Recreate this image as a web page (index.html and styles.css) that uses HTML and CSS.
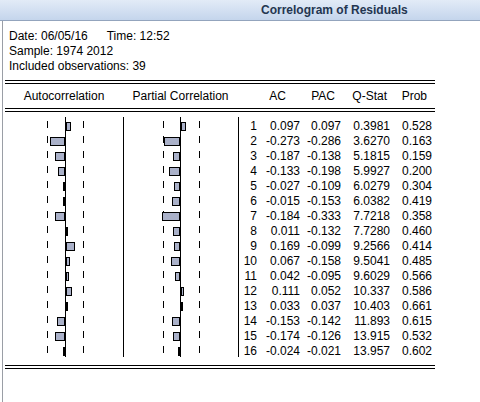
FILE: index.html
```html
<!DOCTYPE html>
<html>
<head>
<meta charset="utf-8">
<link rel="stylesheet" href="styles.css">
</head>
<body>
<div class="titlebar">Correlogram of Residuals</div>
<div class="content">
  <div class="meta">
    <div>Date: 06/05/16<span class="gap">Time: 12:52</span></div>
    <div>Sample: 1974 2012</div>
    <div>Included observations: 39</div>
  </div>
  <div class="table">
    <div class="rule"></div>
    <div class="head">
      <div class="hc hac">Autocorrelation</div>
      <div class="hc hpac">Partial Correlation</div>
      <div class="hnum"><span>AC</span><span>PAC</span><span>Q-Stat</span><span>Prob</span></div>
    </div>
    <div class="rule"></div>
    <div class="body">
      <div class="row">
        <div class="chart ac"><div class="neg"></div><div class="pos"><i class="bar" style="width:5px"></i></div></div>
        <div class="chart pac"><div class="neg"></div><div class="pos"><i class="bar" style="width:5px"></i></div></div>
        <div class="nums"><span>1</span><span>0.097</span><span>0.097</span><span>0.3981</span><span>0.528</span></div>
      </div>
      <div class="row">
        <div class="chart ac"><div class="neg"><i class="bar" style="width:15px"></i></div><div class="pos"></div></div>
        <div class="chart pac"><div class="neg"><i class="bar" style="width:16px"></i></div><div class="pos"></div></div>
        <div class="nums"><span>2</span><span>-0.273</span><span>-0.286</span><span>3.6270</span><span>0.163</span></div>
      </div>
      <div class="row">
        <div class="chart ac"><div class="neg"><i class="bar" style="width:10px"></i></div><div class="pos"></div></div>
        <div class="chart pac"><div class="neg"><i class="bar" style="width:7px"></i></div><div class="pos"></div></div>
        <div class="nums"><span>3</span><span>-0.187</span><span>-0.138</span><span>5.1815</span><span>0.159</span></div>
      </div>
      <div class="row">
        <div class="chart ac"><div class="neg"><i class="bar" style="width:7px"></i></div><div class="pos"></div></div>
        <div class="chart pac"><div class="neg"><i class="bar" style="width:11px"></i></div><div class="pos"></div></div>
        <div class="nums"><span>4</span><span>-0.133</span><span>-0.198</span><span>5.9927</span><span>0.200</span></div>
      </div>
      <div class="row">
        <div class="chart ac"><div class="neg"><i class="bar" style="width:2px"></i></div><div class="pos"></div></div>
        <div class="chart pac"><div class="neg"><i class="bar" style="width:6px"></i></div><div class="pos"></div></div>
        <div class="nums"><span>5</span><span>-0.027</span><span>-0.109</span><span>6.0279</span><span>0.304</span></div>
      </div>
      <div class="row">
        <div class="chart ac"><div class="neg"><i class="bar" style="width:1px"></i></div><div class="pos"></div></div>
        <div class="chart pac"><div class="neg"><i class="bar" style="width:8px"></i></div><div class="pos"></div></div>
        <div class="nums"><span>6</span><span>-0.015</span><span>-0.153</span><span>6.0382</span><span>0.419</span></div>
      </div>
      <div class="row">
        <div class="chart ac"><div class="neg"><i class="bar" style="width:10px"></i></div><div class="pos"></div></div>
        <div class="chart pac"><div class="neg"><i class="bar" style="width:18px"></i></div><div class="pos"></div></div>
        <div class="nums"><span>7</span><span>-0.184</span><span>-0.333</span><span>7.7218</span><span>0.358</span></div>
      </div>
      <div class="row">
        <div class="chart ac"><div class="neg"></div><div class="pos"><i class="bar" style="width:1px"></i></div></div>
        <div class="chart pac"><div class="neg"><i class="bar" style="width:7px"></i></div><div class="pos"></div></div>
        <div class="nums"><span>8</span><span>0.011</span><span>-0.132</span><span>7.7280</span><span>0.460</span></div>
      </div>
      <div class="row">
        <div class="chart ac"><div class="neg"></div><div class="pos"><i class="bar" style="width:9px"></i></div></div>
        <div class="chart pac"><div class="neg"><i class="bar" style="width:6px"></i></div><div class="pos"></div></div>
        <div class="nums"><span>9</span><span>0.169</span><span>-0.099</span><span>9.2566</span><span>0.414</span></div>
      </div>
      <div class="row">
        <div class="chart ac"><div class="neg"></div><div class="pos"><i class="bar" style="width:4px"></i></div></div>
        <div class="chart pac"><div class="neg"><i class="bar" style="width:9px"></i></div><div class="pos"></div></div>
        <div class="nums"><span>10</span><span>0.067</span><span>-0.158</span><span>9.5041</span><span>0.485</span></div>
      </div>
      <div class="row">
        <div class="chart ac"><div class="neg"></div><div class="pos"><i class="bar" style="width:3px"></i></div></div>
        <div class="chart pac"><div class="neg"><i class="bar" style="width:5px"></i></div><div class="pos"></div></div>
        <div class="nums"><span>11</span><span>0.042</span><span>-0.095</span><span>9.6029</span><span>0.566</span></div>
      </div>
      <div class="row">
        <div class="chart ac"><div class="neg"></div><div class="pos"><i class="bar" style="width:6px"></i></div></div>
        <div class="chart pac"><div class="neg"></div><div class="pos"><i class="bar" style="width:3px"></i></div></div>
        <div class="nums"><span>12</span><span>0.111</span><span>0.052</span><span>10.337</span><span>0.586</span></div>
      </div>
      <div class="row">
        <div class="chart ac"><div class="neg"></div><div class="pos"><i class="bar" style="width:2px"></i></div></div>
        <div class="chart pac"><div class="neg"></div><div class="pos"><i class="bar" style="width:2px"></i></div></div>
        <div class="nums"><span>13</span><span>0.033</span><span>0.037</span><span>10.403</span><span>0.661</span></div>
      </div>
      <div class="row">
        <div class="chart ac"><div class="neg"><i class="bar" style="width:8px"></i></div><div class="pos"></div></div>
        <div class="chart pac"><div class="neg"><i class="bar" style="width:8px"></i></div><div class="pos"></div></div>
        <div class="nums"><span>14</span><span>-0.153</span><span>-0.142</span><span>11.893</span><span>0.615</span></div>
      </div>
      <div class="row">
        <div class="chart ac"><div class="neg"><i class="bar" style="width:10px"></i></div><div class="pos"></div></div>
        <div class="chart pac"><div class="neg"><i class="bar" style="width:7px"></i></div><div class="pos"></div></div>
        <div class="nums"><span>15</span><span>-0.174</span><span>-0.126</span><span>13.915</span><span>0.532</span></div>
      </div>
      <div class="row">
        <div class="chart ac"><div class="neg"><i class="bar" style="width:1px"></i></div><div class="pos"></div></div>
        <div class="chart pac"><div class="neg"><i class="bar" style="width:1px"></i></div><div class="pos"></div></div>
        <div class="nums"><span>16</span><span>-0.024</span><span>-0.021</span><span>13.957</span><span>0.602</span></div>
      </div>
    </div>
    <div class="rule bottom"></div>
  </div>
</div>
</body>
</html>
```

FILE: styles.css
```css
html, body {
  margin: 0;
  padding: 0;
  background: #fff;
}
body {
  width: 480px;
  height: 402px;
  overflow: hidden;
  font-family: "Liberation Sans", Arial, sans-serif;
  font-size: 12px;
  color: #000;
}
.titlebar {
  height: 20px;
  line-height: 21px;
  padding-left: 261px;
  font-weight: bold;
  color: #243650;
  background: linear-gradient(#e2ebf7, #c4d5ec);
  border-bottom: 1px solid #93a4bd;
  white-space: nowrap;
}
.content {
  margin-left: 2px;
  border-left: 1px solid #9a9ea6;
  height: 381px;
}
.meta {
  padding: 8px 0 0 6px;
  line-height: 15px;
}
.gap {
  margin-left: 19px;
}
.table {
  margin: 6px 0 0 2px;
  width: 430px;
}
.rule {
  height: 2px;
  border-top: 1px solid #000;
  border-bottom: 1px solid #000;
}
.rule.bottom {
  margin-top: 8px;
}
.head {
  display: flex;
  height: 24px;
  line-height: 24px;
}
.hc {
  text-align: center;
  white-space: nowrap;
}
.hac {
  width: 118px;
}
.hpac {
  width: 115px;
}
.hnum {
  padding-left: 1px;
  display: grid;
  grid-template-columns: 47px 49px 52px 40px;
  text-align: right;
}
.body {
  margin-top: 5px;
}
.row {
  display: flex;
  height: 15px;
}
.chart {
  display: flex;
  height: 15px;
}
.chart.ac {
  width: 118px;
  background:
    linear-gradient(#000, #000) 42px 4px / 1px 7px no-repeat,
    linear-gradient(#000, #000) 78px 4px / 1px 7px no-repeat;
}
.chart.pac {
  width: 114px;
  border-left: 1px solid #000;
  background:
    linear-gradient(#000, #000) 39px 4px / 1px 7px no-repeat,
    linear-gradient(#000, #000) 75px 4px / 1px 7px no-repeat;
}
.neg {
  display: flex;
  justify-content: flex-end;
  align-items: flex-start;
  border-right: 1px solid #000;
}
.ac .neg {
  width: 60px;
}
.pac .neg {
  width: 56px;
}
.pos {
  flex: 1;
  display: flex;
  align-items: flex-start;
}
.bar {
  display: block;
  box-sizing: border-box;
  height: 9px;
  margin-top: 5px;
  border: 1px solid #000;
  background: #aab1c9;
}
.nums {
  flex: 1;
  border-left: 1px solid #000;
  display: grid;
  grid-template-columns: 18px 43px 41px 49px 42px;
  text-align: right;
  box-sizing: border-box;
  height: 15px;
  padding-top: 2px;
  line-height: 15px;
  white-space: nowrap;
}
```
